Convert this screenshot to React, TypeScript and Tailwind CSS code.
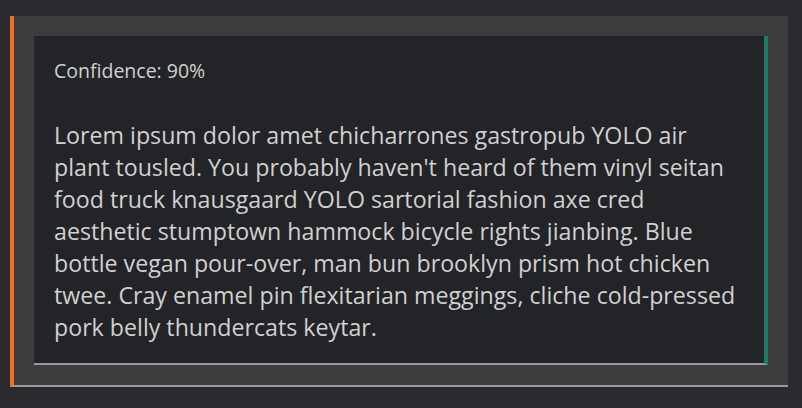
export default function App() {
  return (
    <div className="min-h-[408px] bg-[#2a2a2e] pt-4 pl-[10px] pr-[14px] pb-5" style={{ fontFamily: '"Open Sans", sans-serif' }}>
      <div className="border-l-4 border-b-2 border-l-[#f26c22] border-b-[#9a9a9a] bg-[#3c3c3c] p-5">
        <div className="border-r-4 border-b-2 border-r-[#1d7a66] border-b-[#9a9a9a] bg-[#232427] px-5 pt-5 pb-5 text-[#d0d0d0]">
          <p className="text-[19.5px] leading-[30px]">Confidence: 90%</p>
          <p className="mt-[33px] text-[23.2px] leading-[32px]">
            Lorem ipsum dolor amet chicharrones gastropub YOLO air plant tousled. You probably haven't heard of them vinyl seitan food truck knausgaard YOLO sartorial fashion axe cred aesthetic stumptown hammock bicycle rights jianbing. Blue bottle vegan pour-over, man bun brooklyn prism hot chicken twee. Cray enamel pin flexitarian meggings, cliche cold-pressed pork belly thundercats keytar.
          </p>
        </div>
      </div>
    </div>
  );
}
